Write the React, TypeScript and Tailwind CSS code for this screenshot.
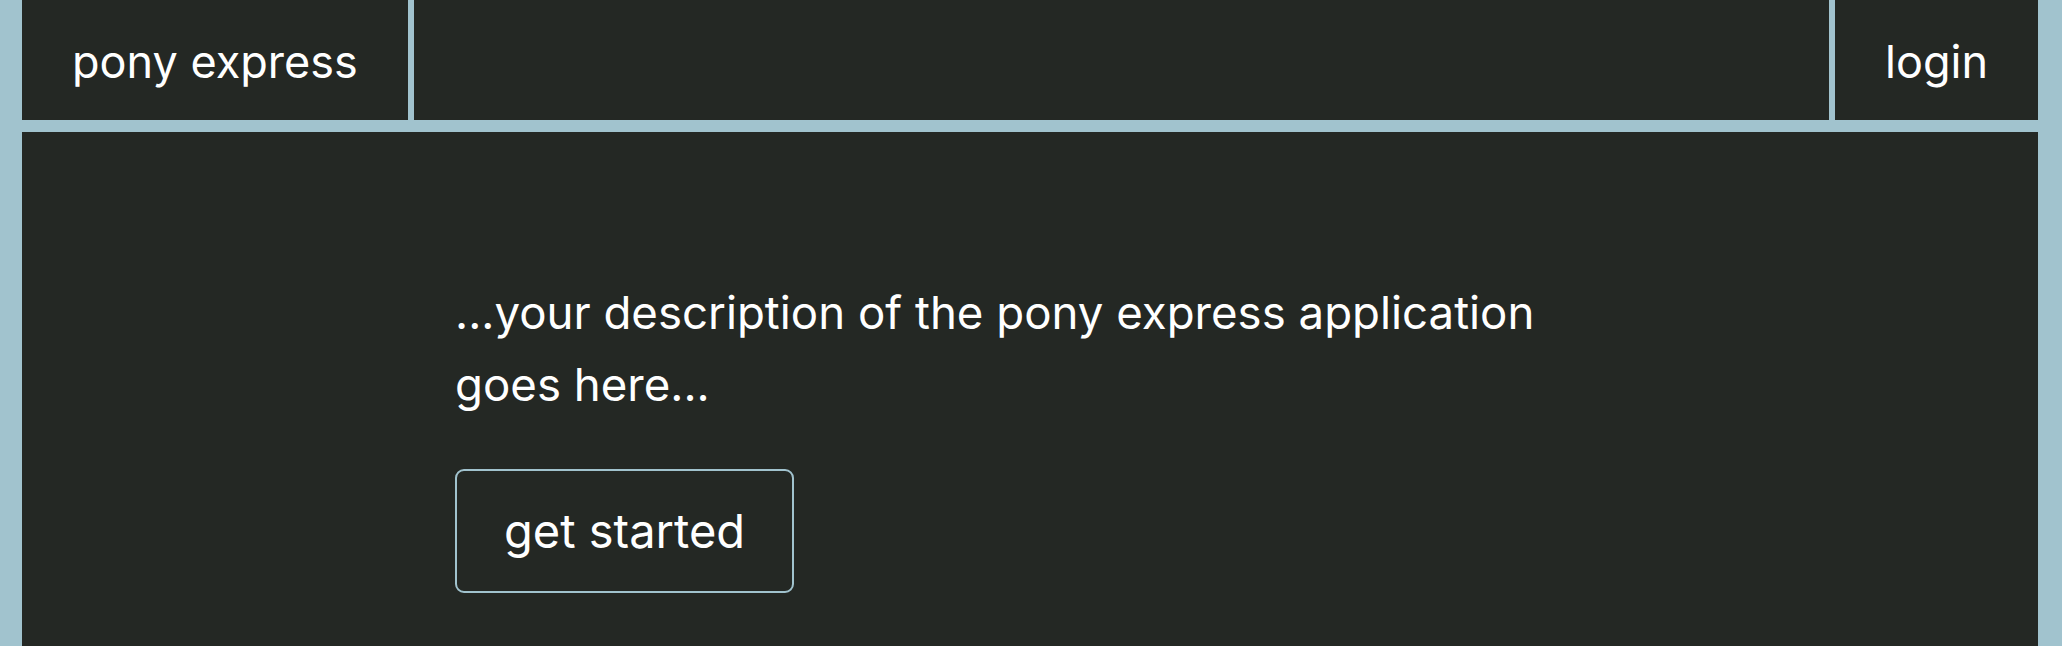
export default function App() {
  return (
    <div
      className="h-screen flex flex-col bg-[#a1c3ce] pl-[22px] pr-[24px] text-white"
      style={{ fontFamily: "Inter, 'Liberation Sans', sans-serif" }}
    >
      {/* top bar */}
      <header className="flex h-[120px] gap-[6px] shrink-0">
        <div className="flex items-center bg-[#242824] px-[50px] pt-[4px] text-[45px]">
          pony express
        </div>
        <div className="flex-1 bg-[#242824]" />
        <div className="flex items-center bg-[#242824] px-[50px] pt-[4px] text-[45px]">
          login
        </div>
      </header>

      <main className="mt-[12px] flex-1 bg-[#242824]">
        <div className="mx-auto w-[1150px] pt-[145px]">
          <p className="text-[45.6px] leading-[72px]">
            ...your description of the pony express application goes here...
          </p>
          <button className="mt-[48px] h-[124px] w-[339px] rounded-[9px] border-2 border-[#a1c3ce] text-[47px]">
            get started
          </button>
        </div>
      </main>
    </div>
  );
}
